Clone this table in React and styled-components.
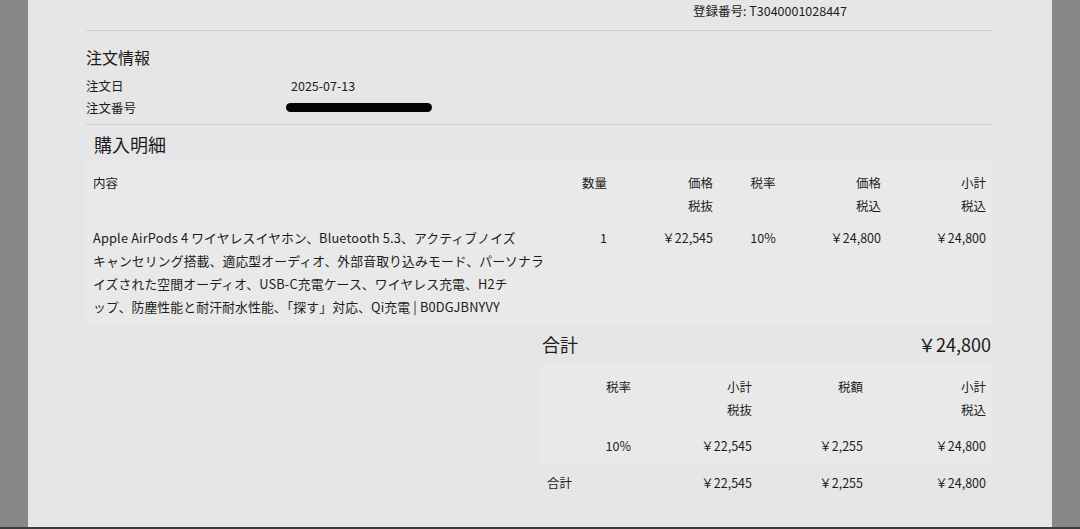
import React from "react";
import styled, { createGlobalStyle } from "styled-components";

const GlobalStyle = createGlobalStyle`
html, body {
  margin: 0;
  padding: 0;
  background: #888888;
}
* {
  box-sizing: border-box;
}
`

const Frame = styled.div`
height: 529px;
padding: 0 28px;
background: #888888;
border-bottom: 2px solid #3c3c3c;
font-family: "Noto Sans CJK JP", "Noto Sans", sans-serif;
color: #1c1c1c;
`

const Sheet = styled.div`
height: 100%;
background: #e6e6e6;
padding: 0 59px 0 58px;
overflow: hidden;
`

const Header = styled.div`
display: grid;
grid-template-columns: 1fr 300px;
height: 31px;
padding-top: 3px;
border-bottom: 1px solid #cfcfcf;
font-size: 12.5px;
line-height: 16px;
`

const InfoSection = styled.div`
padding: 15px 0 6px;
border-bottom: 1px solid #cfcfcf;
`

const SectionTitle = styled.div`
font-size: ${(p) => p.size || 16}px;
line-height: ${(p) => (p.size ? p.size + 6 : 22)}px;
margin: ${(p) => p.margin || "0 0 6px"};
padding-left: ${(p) => p.indent || 0}px;
`

const InfoRow = styled.div`
display: grid;
grid-template-columns: 200px 1fr;
align-items: center;
height: 22px;
font-size: 12.5px;
`

const Value = styled.span`
padding-left: 5px;
`

const Redacted = styled.span`
display: block;
width: 146px;
height: 9px;
border-radius: 5px;
background: #050505;
`

const Grid = styled.div`
display: grid;
grid-template-columns: ${(p) => p.cols};
width: ${(p) => p.width}px;
margin-left: ${(p) => p.offset || 0}px;
background: ${(p) => (p.shaded ? "#e9e9e9" : "transparent")};
padding: ${(p) => p.pad || "0"};
font-size: 12.5px;
line-height: 23px;
`

const Cell = styled.div`
padding: 0 7px;
text-align: ${(p) => p.align || "left"};
white-space: nowrap;
`

const Description = styled(Cell)`
font-size: 12.8px;
letter-spacing: 0.15px;
`

const TotalRow = styled.div`
display: flex;
justify-content: space-between;
align-items: center;
width: 453px;
margin-left: 454px;
height: 42px;
padding: 0 2px;
font-size: 18px;
`

const itemCols = "466px 62px 106px 86px 82px 105px"
const taxCols = "98px 121px 111px 123px"

const description = [
  "Apple AirPods 4 ワイヤレスイヤホン、Bluetooth 5.3、アクティブノイズ",
  "キャンセリング搭載、適応型オーディオ、外部音取り込みモード、パーソナラ",
  "イズされた空間オーディオ、USB-C充電ケース、ワイヤレス充電、H2チ",
  "ップ、防塵性能と耐汗耐水性能、「探す」対応、Qi充電 | B0DGJBNYVY",
]

function Lines({ children }) {
  return children.map((t, i) => <div key={i}>{t}</div>)
}

export default function App() {
  return (
    <>
      <GlobalStyle />
      <Frame>
        <Sheet>
          <Header>
            <div />
            <div>登録番号: T3040001028447</div>
          </Header>

          <InfoSection>
            <SectionTitle>注文情報</SectionTitle>
            <InfoRow>
              <span>注文日</span>
              <Value>2025-07-13</Value>
            </InfoRow>
            <InfoRow>
              <span>注文番号</span>
              <Redacted />
            </InfoRow>
          </InfoSection>

          <SectionTitle size={18} indent={8} margin="7px 0 5px">購入明細</SectionTitle>

          <Grid cols={itemCols} width={907} shaded pad="10px 0 0" style={{ height: 57 }}>
            <Cell>内容</Cell>
            <Cell align="right">数量</Cell>
            <Cell align="right"><Lines>{["価格", "税抜"]}</Lines></Cell>
            <Cell align="center">税率</Cell>
            <Cell align="right"><Lines>{["価格", "税込"]}</Lines></Cell>
            <Cell align="right"><Lines>{["小計", "税込"]}</Lines></Cell>
          </Grid>
          <Grid cols={itemCols} width={907} shaded pad="7px 0 5px" style={{ marginTop: 1 }}>
            <Description><Lines>{description}</Lines></Description>
            <Cell align="right">1</Cell>
            <Cell align="right">￥22,545</Cell>
            <Cell align="center">10%</Cell>
            <Cell align="right">￥24,800</Cell>
            <Cell align="right">￥24,800</Cell>
          </Grid>

          <TotalRow>
            <span>合計</span>
            <span>￥24,800</span>
          </TotalRow>

          <Grid cols={taxCols} width={453} offset={454} shaded pad="10px 0 4px">
            <Cell align="right">税率</Cell>
            <Cell align="right"><Lines>{["小計", "税抜"]}</Lines></Cell>
            <Cell align="right">税額</Cell>
            <Cell align="right"><Lines>{["小計", "税込"]}</Lines></Cell>
          </Grid>
          <Grid cols={taxCols} width={453} offset={454} shaded pad="8px 0 6px" style={{ marginTop: 1 }}>
            <Cell align="right">10%</Cell>
            <Cell align="right">￥22,545</Cell>
            <Cell align="right">￥2,255</Cell>
            <Cell align="right">￥24,800</Cell>
          </Grid>
          <Grid cols={taxCols} width={453} offset={454} pad="8px 0">
            <Cell>合計</Cell>
            <Cell align="right">￥22,545</Cell>
            <Cell align="right">￥2,255</Cell>
            <Cell align="right">￥24,800</Cell>
          </Grid>
        </Sheet>
      </Frame>
    </>
  )
}
